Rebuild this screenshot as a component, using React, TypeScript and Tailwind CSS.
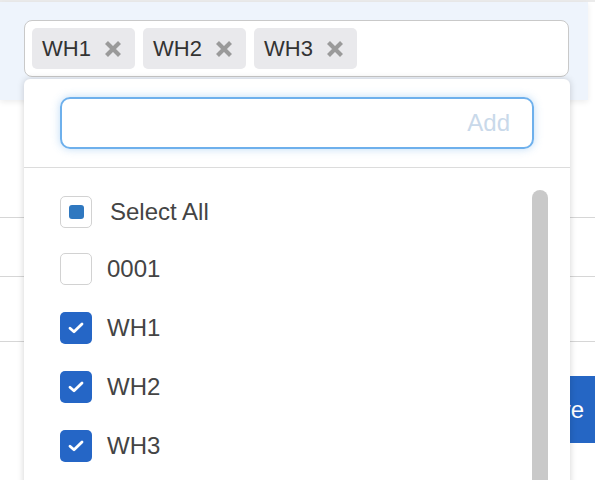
import React from "react";

const XIcon = () => (
  <svg width="18" height="18" viewBox="0 0 18 18" className="shrink-0">
    <path d="M2.5 2.5 L15.5 15.5 M15.5 2.5 L2.5 15.5" stroke="#9a9a9a" strokeWidth="4.2" strokeLinecap="butt" />
  </svg>
);

const Chip = ({ label }: { label: string }) => (
  <div className="flex items-center h-[41px] w-[103px] rounded-[5px] bg-[#e9e9ec] pl-[10px] gap-[13px]">
    <span className="text-[22px] leading-none text-[#333]">{label}</span>
    <XIcon />
  </div>
);

const Check = () => (
  <svg width="18" height="14" viewBox="0 0 18 14">
    <path d="M3 7.2 L7 10.8 L15 3" stroke="white" strokeWidth="2.8" fill="none" strokeLinecap="round" strokeLinejoin="round" />
  </svg>
);

type Item = { label: string; state: "none" | "checked" | "partial"; h: string; extra?: string };

const items: Item[] = [
  { label: "Select All", state: "partial", h: "h-[55px]", extra: "ml-[3px]" },
  { label: "0001", state: "none", h: "h-[59px]" },
  { label: "WH1", state: "checked", h: "h-[59px]" },
  { label: "WH2", state: "checked", h: "h-[59px]" },
  { label: "WH3", state: "checked", h: "h-[59px]" },
];

export default function App() {
  return (
    <div
      className="relative w-[595px] h-[480px] overflow-hidden bg-white"
      style={{ fontFamily: '"Liberation Sans", Arial, sans-serif' }}
    >
      {/* Background page */}
      <div className="h-[2px] bg-[#ebebeb]" />
      <div className="w-[588px] h-[98px] bg-[#eef4fc] shadow-[0_2px_6px_rgba(0,0,0,0.08)] pt-[18px] pl-[24px]">
        <div className="w-[545px] h-[57px] rounded-[8px] border-[1.5px] border-[#c9c9c9] bg-white flex items-center gap-[8px] pl-[7px]">
          <Chip label="WH1" />
          <Chip label="WH2" />
          <Chip label="WH3" />
        </div>
      </div>
      <div className="h-[118px] border-b border-[#d6d6d6]" />
      <div className="h-[59px] border-b border-[#d6d6d6]" />
      <div className="h-[65px] border-b border-[#d6d6d6]" />
      <div className="h-[34px]" />
      <div className="flex justify-end">
        <div className="h-[67px] w-[120px] bg-[#2566c4] flex items-center justify-end pr-[11px] text-white text-[24px]">
          Save
        </div>
      </div>

      {/* Dropdown overlay */}
      <div className="absolute left-[24px] top-[79px] w-[546px] h-[420px] bg-white rounded-t-[6px] shadow-[0_0_7px_rgba(0,0,0,0.18)]">
        <div className="h-[89px] border-b-[1.5px] border-[#dcdcdc] pt-[18px] pl-[36px]">
          <div className="w-[474px] h-[52px] rounded-[10px] border-2 border-[#6eb0ec] shadow-[0_0_8px_rgba(110,176,236,0.45)] flex items-center justify-end pr-[22px]">
            <span className="text-[24px] text-[#c9d9ea]">Add</span>
          </div>
        </div>
        <div className="relative">
          <div className="absolute left-[508px] top-[22px] w-[16px] h-[400px] rounded-full bg-[#c9c9c9]" />
          <div className="pt-[16px] pl-[36px] flex flex-col">
            {items.map((it) => (
              <div key={it.label} className={`${it.h} flex items-center gap-[15px]`}>
                {it.state === "checked" ? (
                  <div className="w-[32px] h-[32px] rounded-[5px] bg-[#2566c6] flex items-center justify-center">
                    <Check />
                  </div>
                ) : (
                  <div className="w-[32px] h-[32px] rounded-[5px] border-[1.5px] border-[#d2d2d2] bg-white flex items-center justify-center">
                    {it.state === "partial" && <div className="w-[15px] h-[14px] rounded-[3px] bg-[#2f78c0]" />}
                  </div>
                )}
                <span className={`text-[24px] text-[#444] leading-none ${it.extra ?? ""}`}>{it.label}</span>
              </div>
            ))}
          </div>
        </div>
      </div>
    </div>
  );
}
